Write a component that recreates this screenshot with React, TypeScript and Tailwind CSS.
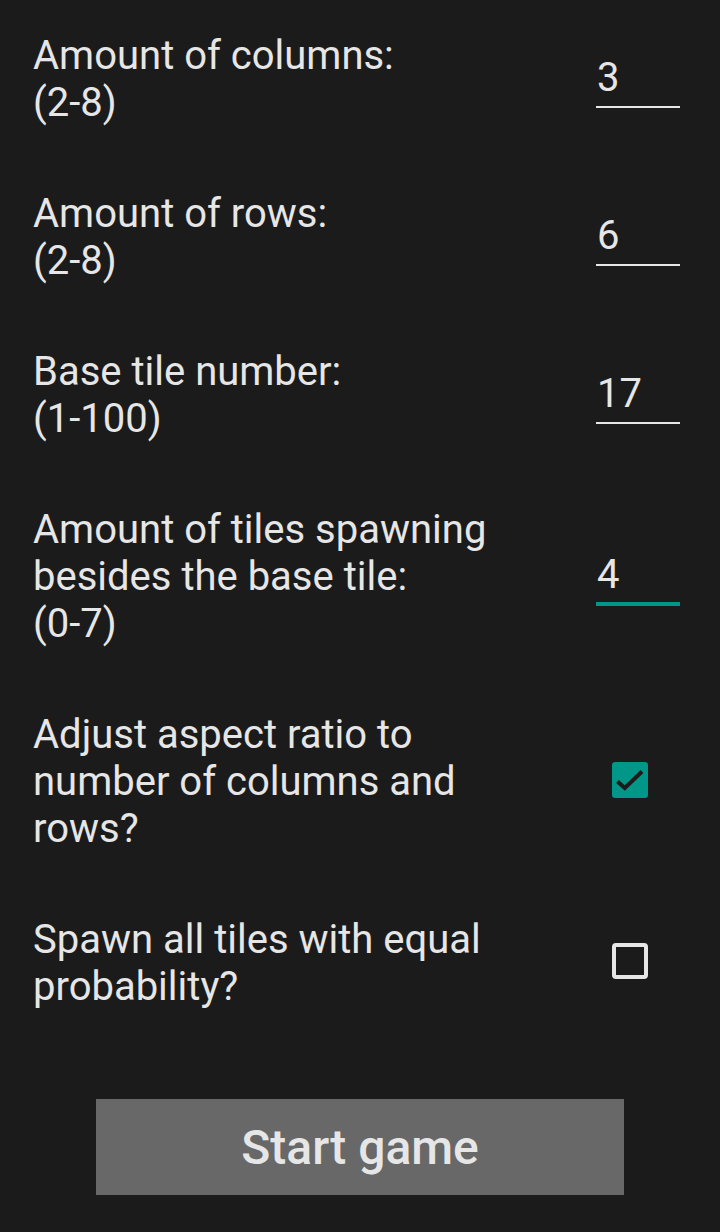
import React from "react";

function NumberField({ value, focused = false }: { value: string; focused?: boolean }) {
  return (
    <div
      className={`ml-auto mr-[40px] mt-[4px] w-[84px] pl-[1px] ${
        focused ? "border-b-4 border-[#009688] pb-[4px]" : "border-b-2 border-[#e6e6e6] pb-[5px]"
      }`}
    >
      {value}
    </div>
  );
}

function CheckBox({ checked }: { checked: boolean }) {
  return (
    <div className="-mt-[4px] ml-[89px] h-[36px] w-[36px]">
      {checked ? (
        <svg width="36" height="36" viewBox="0 0 36 36">
          <rect x="0" y="0" width="36" height="36" rx="3" fill="#009688" />
          <path d="M5.5 19.5 L12.8 26 L30 9.5" fill="none" stroke="#1b1b1b" strokeWidth="4" />
        </svg>
      ) : (
        <div className="h-[36px] w-[36px] rounded-[4px] border-4 border-[#e6e6e6]" />
      )}
    </div>
  );
}

export default function App() {
  return (
    <div className="min-h-[1232px] w-[720px] bg-[#1b1b1b] pt-[32px] font-['Roboto',sans-serif] text-[40px] leading-[47px] text-[#e6e6e6]">
      <div className="flex flex-col gap-[64px]">
        <div className="flex items-center">
          <div className="w-[523px] pl-[33px]">
            Amount of columns:
            <br />
            (2-8)
          </div>
          <NumberField value="3" />
        </div>
        <div className="flex items-center">
          <div className="w-[523px] pl-[33px]">
            Amount of rows:
            <br />
            (2-8)
          </div>
          <NumberField value="6" />
        </div>
        <div className="flex items-center">
          <div className="w-[523px] pl-[33px]">
            Base tile number:
            <br />
            (1-100)
          </div>
          <NumberField value="17" />
        </div>
        <div className="flex items-center">
          <div className="w-[523px] pl-[33px]">
            Amount of tiles spawning besides the base tile:
            <br />
            (0-7)
          </div>
          <NumberField value="4" focused />
        </div>
        <div className="flex items-center">
          <div className="w-[523px] pl-[33px]">Adjust aspect ratio to number of columns and rows?</div>
          <CheckBox checked />
        </div>
        <div className="flex items-center">
          <div className="w-[523px] pl-[33px]">Spawn all tiles with equal probability?</div>
          <CheckBox checked={false} />
        </div>
      </div>
      <div className="mt-[89px] flex justify-center">
        <button
          type="button"
          className="flex h-[96px] w-[528px] items-center justify-center bg-[#686868] text-[48px] font-medium text-[#e6e6e6]"
        >
          Start game
        </button>
      </div>
    </div>
  );
}
